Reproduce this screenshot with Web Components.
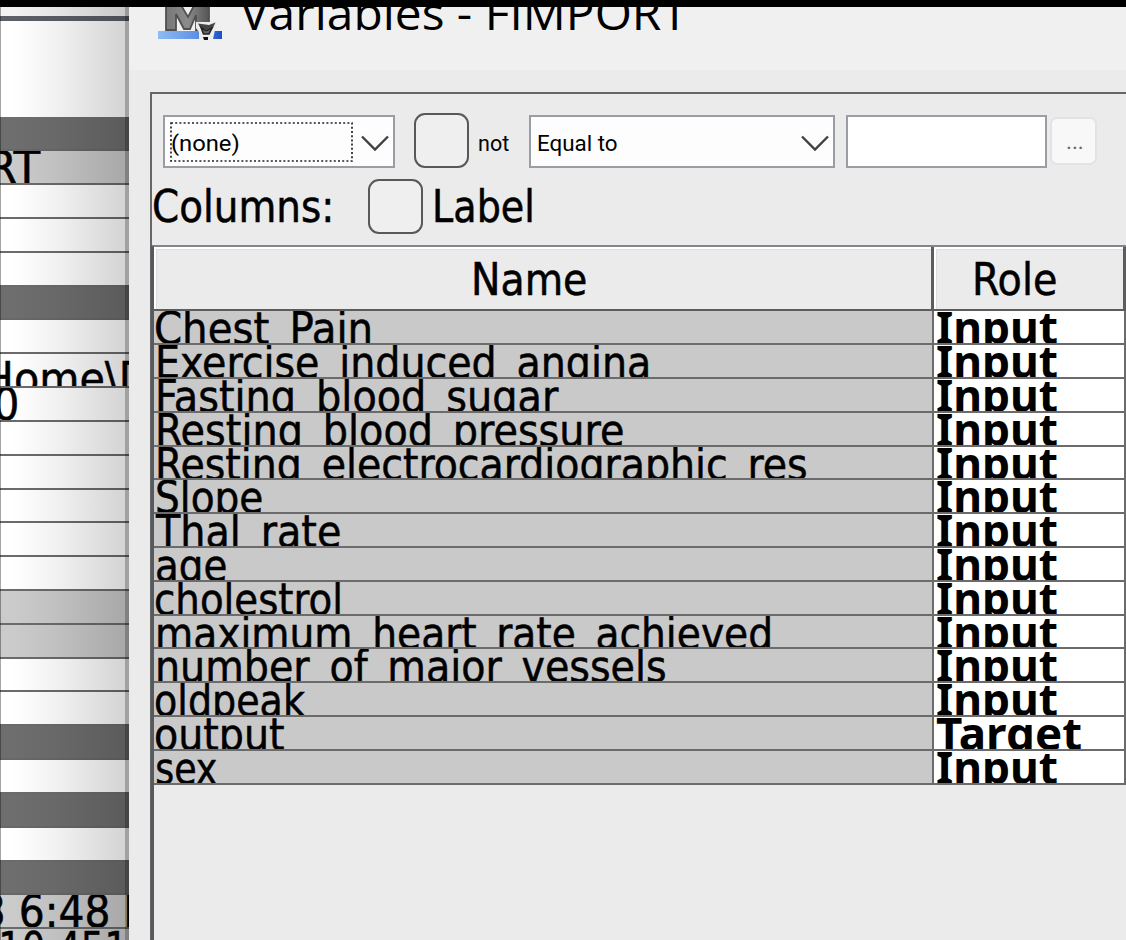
<!DOCTYPE html>
<html lang="en">
<head>
<meta charset="utf-8">
<title>Variables - FIMPORT</title>
<style>
html,body{margin:0;height:100%;overflow:hidden;background:#000}
body{font-family:"DejaVu Sans Condensed","DejaVu Sans",sans-serif;color:#000}
</style>
</head>
<body>
<app-screen></app-screen>
<script>
const ctx = document.createElement('canvas').getContext('2d');
const FACES = {
  ui: '"DejaVu Sans Condensed","DejaVu Sans",sans-serif',
  title: '"Open Sans",sans-serif',
  small: 'Roboto,sans-serif',
  strong: '"Noto Sans",sans-serif'
};

// One line of text, fitted to an ink box: x (left), w (ink width), base (baseline).
class FitText extends HTMLElement {
  connectedCallback() {
    const a = n => parseFloat(this.getAttribute(n));
    const size = a('size') || 44, key = this.getAttribute('face') || 'ui', face = FACES[key];
    const weight = this.getAttribute('weight') || 400;
    const text = this.getAttribute('text');
    ctx.font = `${weight} ${size}px ${face}`;
    const m = ctx.measureText(text);
    const k = a('w') / (m.actualBoundingBoxLeft + m.actualBoundingBoxRight);
    const A = Math.round(m.fontBoundingBoxAscent), D = Math.round(m.fontBoundingBoxDescent);
    const ty = a('base') - ((size - A - D) / 2 + A);
    const tx = a('x') + m.actualBoundingBoxLeft * k;
    const root = this.attachShadow({mode: 'open'});
    root.innerHTML = `<style>:host{display:block;width:0;height:0;flex:none}
      span{display:block;width:max-content;white-space:pre;font:${weight} ${size}px/${size}px ${face};
      -webkit-text-stroke:${key === 'ui' ? '.5px' : '0'};
      transform-origin:0 0;transform:translate(${tx}px,${ty}px) scaleX(${k})}</style><span></span>`;
    root.querySelector('span').textContent = text;
  }
}
customElements.define('fit-text', FitText);

class CheckBox extends HTMLElement {
  constructor() {
    super();
    this.attachShadow({mode: 'open'}).innerHTML = `<style>:host{display:block;flex:none;box-sizing:border-box;width:55px;height:55px;
      border:2.5px solid #585858;border-radius:11px;background:#efefef}</style>`;
  }
}
customElements.define('check-box', CheckBox);

class ComboBox extends HTMLElement {
  constructor() {
    super();
    this.attachShadow({mode: 'open'}).innerHTML = `<style>
      :host{display:flex;justify-content:space-between;flex:none;box-sizing:border-box;height:53px;border:2px solid #9b9da4;background:#fdfdfd}
      .face{flex:1;margin:5px 0 5px 5px;height:40px;box-sizing:border-box;position:relative}
      .dots{display:none}
      :host([focused]) .dots{display:block;position:absolute;inset:0;width:100%;height:100%}
      svg{flex:none}
      .arrow{width:28px;height:18px;margin:17px 4px 0 8px}
    </style><div class="face"><svg class="dots"><rect x="1" y="1" width="181" height="38" fill="none" stroke="#222" stroke-width="1.7" stroke-dasharray="2 2.2"/></svg><slot></slot></div>
    <svg class="arrow" viewBox="0 0 28 18"><path d="M1 2.5 14 15.5 27 2.5" fill="none" stroke="#414141" stroke-width="2.4"/></svg>`;
  }
}
customElements.define('combo-box', ComboBox);

class AppIcon extends HTMLElement {
  constructor() {
    super();
    this.attachShadow({mode: 'open'}).innerHTML = `<style>:host{display:block;width:76px;height:40px;flex:none}svg{display:block}</style>
    <svg width="76" height="40" viewBox="150 7 76 40">
      <defs><linearGradient id="b"><stop stop-color="#8fbcf4"/><stop offset=".6" stop-color="#5f92e4"/><stop offset="1" stop-color="#1c50c4"/></linearGradient>
      <linearGradient id="g"><stop stop-color="#777"/><stop offset=".5" stop-color="#8c8c8c"/><stop offset="1" stop-color="#555"/></linearGradient></defs>
      <rect x="158" y="31" width="64" height="8" fill="url(#b)"/>
      <path d="M166 0H178L188 17 197 0H209V30H196V15L190 29H184L176 14V30H166Z" fill="url(#g)" stroke="#505050" stroke-width="1.8"/>
      <path d="M196 22h21l-2 8-2 9h-14l0-7-3-4z" fill="#ececec"/>
      <path d="M198 23.5 209 25 215.5 22.5 213 27.5 206 29.5 200 27Z" fill="#444"/>
      <path d="M201 27.5 206 30.5 212 28 209 34H203.500Z" fill="#666" stroke="#222" stroke-width="1.6"/>
      <path d="M203 37h5v3h-4z" fill="#111"/>
    </svg>`;
  }
}
customElements.define('app-icon', AppIcon);

class PropRow extends HTMLElement {
  constructor() {
    super();
    this.attachShadow({mode: 'open'}).innerHTML = `<style>
      :host{display:block;flex:none;height:33.84px;box-sizing:border-box;overflow:hidden;background:#fff;border-bottom:2px solid #6b6b6b}
      :host([kind=head]){background:#6e6e6e;border-bottom-color:#686868}
      :host([kind=ro]){background:#cbcbcb}</style><slot></slot>`;
  }
}
customElements.define('prop-row', PropRow);

class PropSheet extends HTMLElement {
  constructor() {
    super();
    const t = (x, w, base, s) => `<fit-text x="${x}" w="${w}" base="${base}" text="${s}"></fit-text>`;
    const rows = [['head'], ['ro', t(-10, 51, 32, 'RT')], [], [], [], ['head'], [], ['', t(-14, 163, 40, 'Home\\D')],
      ['', t(-5, 22, 32, '0')], [], [], [], [], [], ['ro'], ['ro'], [], [], ['head'], [], ['head'], [], ['head'],
      ['ro', t(-17, 164, 32.5, '3 6:48 P')], ['ro', t(2, 123, 35, '10.451')]];
    this.attachShadow({mode: 'open'}).innerHTML = `<style>
      :host{display:block;position:relative;width:129px;flex:none;overflow:hidden;background:#fff}
      .col{display:flex;flex-direction:column}
      .bar{height:9px;flex:none;background:#f2f2f2;border-bottom:5px solid #5b5f66}
      .blank{height:96.4px;flex:none;background:#fff}
      .shade{position:absolute;inset:0;background:linear-gradient(90deg,rgba(0,0,0,.35) 0 1px,transparent 1px 4px),
        linear-gradient(90deg,transparent 124.5px,rgba(0,0,0,.24) 125.5px),
        linear-gradient(90deg,transparent 12px,rgba(0,0,0,.05) 55px,rgba(0,0,0,.17) 124px)}
    </style><div class="col"><div class="bar"></div><div class="blank"></div>` +
      rows.map(([k = '', c = '']) => `<prop-row kind="${k}">${c}</prop-row>`).join('') + `</div><div class="shade"></div>`;
  }
}
customElements.define('prop-sheet', PropSheet);

class FilterBar extends HTMLElement {
  constructor() {
    super();
    this.attachShadow({mode: 'open'}).innerHTML = `<style>
      :host{display:block;height:151px;flex:none}
      .row{display:flex;align-items:flex-start}
      .r1{padding:19px 0 0 11px;height:66px;box-sizing:content-box}
      .c1{width:232px;margin-top:2px}.k1{margin-left:19px}
      .c2{width:306px;margin:2px 0 0 60px}
      .in{box-sizing:border-box;width:201px;height:53px;margin:2px 0 0 11px;border:2px solid #9b9da4;background:#fff;flex:none}
      .btn{box-sizing:border-box;width:47px;height:48px;margin:4px 0 0 3px;border:2px solid #e3e3e3;border-radius:7px;background:#f8f8f8;flex:none;color:#666}
      .k2{margin-left:216px}
    </style>
    <div class="row r1">
      <combo-box class="c1" focused><fit-text face="small" size="22" x="2" w="67" base="29" text="(none)"></fit-text></combo-box>
      <check-box class="k1"></check-box>
      <fit-text face="small" size="22" x="10" w="30" base="38" text="not"></fit-text>
      <combo-box class="c2"><fit-text face="small" size="22" x="2" w="79" base="29" text="Equal to"></fit-text></combo-box>
      <div class="in"></div>
      <div class="btn"><fit-text face="small" size="22" x="15" w="16" base="30" text="..."></fit-text></div>
    </div>
    <div class="row">
      <fit-text x="2" w="176" base="43" text="Columns:"></fit-text>
      <check-box class="k2"></check-box>
      <fit-text x="12" w="97" base="43" text="Label"></fit-text>
    </div>`;
  }
}
customElements.define('filter-bar', FilterBar);

class VarTable extends HTMLElement {
  constructor() {
    super();
    const data = [['Chest_Pain', 155, 369], ['Exercise_induced_angina', 157, 647], ['Fasting_blood_sugar', 157, 558],
      ['Resting_blood_pressure', 157, 622], ['Resting_electrocardiographic_res', 157, 805], ['Slope', 156, 261],
      ['Thal_rate', 154, 339], ['age', 156, 225], ['cholestrol', 155, 339], ['maximum_heart_rate_achieved', 157, 769],
      ['number_of_major_vessels', 157, 664], ['oldpeak', 155, 304], ['output', 155, 283], ['sex', 156, 216]];
    this.attachShadow({mode: 'open'}).innerHTML = `<style>
      :host{display:block;flex:1;border-top:2px solid #80868c;border-left:3px solid #555a61;margin-left:-1px}
      .head,.row{display:grid;grid-template-columns:780px 192px}
      .head>div{box-sizing:border-box;height:64.2px;border:solid #5c5c5c;border-width:0 3px 2px 0;box-shadow:inset 2px 2px #fff,inset 3px 3px #ddd;background:#ebebeb}
      .row{height:33.83px}
      .row>div{box-sizing:border-box;overflow:hidden;border-bottom:2px solid #6b6b6b;border-right:2px solid #6b6b6b}
      .n{background:#c9c9c9}.r{background:#fff}
    </style>
    <div class="head"><div><fit-text x="320" w="112" base="48" text="Name"></fit-text></div>
    <div><fit-text x="41" w="81" base="48" text="Role"></fit-text></div></div>` +
    data.map(([s, a, b]) => {
      const tgt = s === 'output';
      return `<div class="row"><div class="n"><fit-text x="${a - 153}" w="${b - a}" base="33" text="${s}"></fit-text></div>
      <div class="r"><fit-text face="strong" weight="700" size="44" x="${tgt ? 2 : 3}" w="${tgt ? 145 : 120}" base="32.5" text="${tgt ? 'Target' : 'Input'}"></fit-text></div></div>`;
    }).join('');
  }
}
customElements.define('var-table', VarTable);

class VarDialog extends HTMLElement {
  constructor() {
    super();
    this.attachShadow({mode: 'open'}).innerHTML = `<style>
      :host{display:flex;flex-direction:column;flex:1;min-width:0;overflow:hidden;background:#ebebeb}
      .title{display:flex;height:63px;flex:none;background:#f0f0f0;padding-left:21px}
      .panel{display:flex;flex-direction:column;flex:1;margin:22px 0 0 21px;border:solid #666;border-width:2px 0 0 2px;width:990px}
    </style>
    <div class="title"><app-icon></app-icon><fit-text face="title" size="45" x="14" w="448" base="23" text="Variables - FIMPORT"></fit-text></div>
    <div class="panel"><filter-bar></filter-bar><var-table></var-table></div>`;
  }
}
customElements.define('var-dialog', VarDialog);

class AppScreen extends HTMLElement {
  constructor() {
    super();
    this.attachShadow({mode: 'open'}).innerHTML = `<style>
      :host{display:flex;box-sizing:border-box;width:1126px;height:940px;padding-top:7px;background:#000;overflow:hidden}
    </style><prop-sheet></prop-sheet><var-dialog></var-dialog>`;
  }
}
customElements.define('app-screen', AppScreen);
</script>
</body>
</html>
